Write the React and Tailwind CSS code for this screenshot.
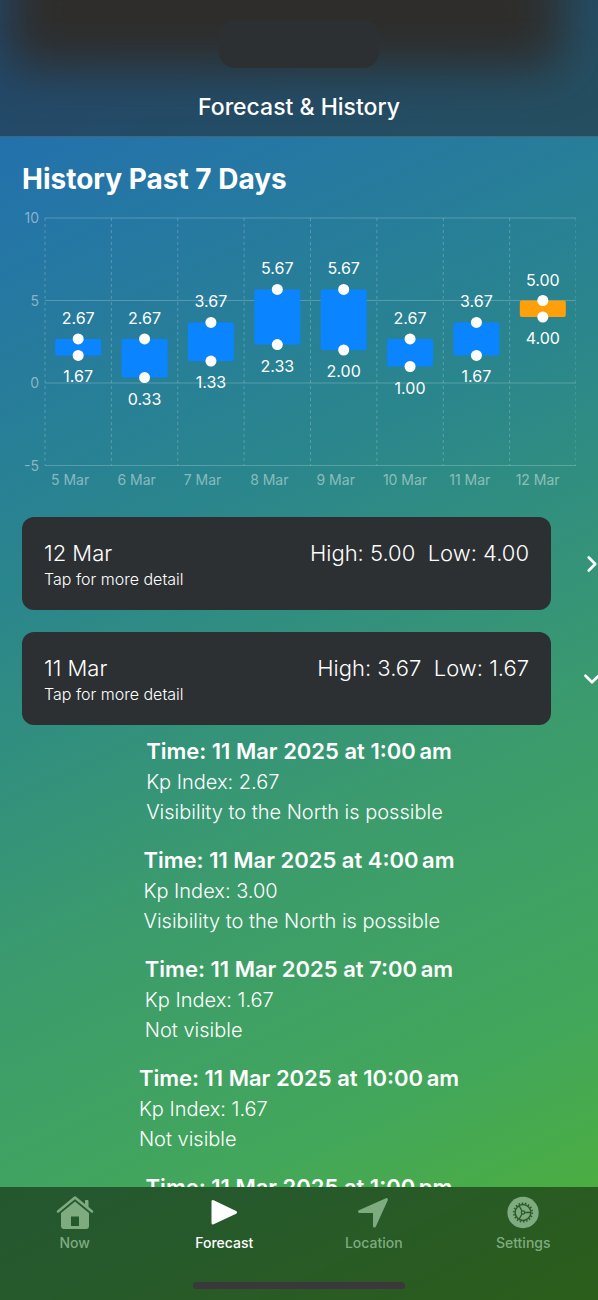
import { ChevronRight, ChevronDown } from 'lucide-react';

const history = [
  { day: '5 Mar', high: 2.67, low: 1.67 },
  { day: '6 Mar', high: 2.67, low: 0.33 },
  { day: '7 Mar', high: 3.67, low: 1.33 },
  { day: '8 Mar', high: 5.67, low: 2.33 },
  { day: '9 Mar', high: 5.67, low: 2.0 },
  { day: '10 Mar', high: 2.67, low: 1.0 },
  { day: '11 Mar', high: 3.67, low: 1.67 },
  { day: '12 Mar', high: 5.0, low: 4.0 },
];

const readings = [
  { time: '1:00\u202fam', kp: '2.67', text: 'Visibility to the North is possible' },
  { time: '4:00\u202fam', kp: '3.00', text: 'Visibility to the North is possible' },
  { time: '7:00\u202fam', kp: '1.67', text: 'Not visible' },
  { time: '10:00\u202fam', kp: '1.67', text: 'Not visible' },
  { time: '1:00\u202fpm', kp: '2.00', text: 'Not visible' },
];

// plot area inside the 554x288 chart
const LEFT = 23;
const RIGHT = 554;
const STEP = (RIGHT - LEFT) / history.length;
const yFor = (v) => 176 - v * 16.5;

function HistoryChart() {
  return (
    <svg viewBox="0 0 554 288" className="block w-full" role="img" aria-label="Kp index, past 7 days">
      {[10, 5, 0, -5].map(v => (
        <g key={v}>
          <line x1={LEFT} x2={RIGHT} y1={yFor(v)} y2={yFor(v)} stroke="#fff" strokeOpacity="0.22" />
          <text x="17" y={yFor(v) + 5} textAnchor="end" className="fill-white/45 text-[14px]">{v}</text>
        </g>
      ))}
      {Array.from({ length: history.length + 1 }, (_, i) => (
        <line
          key={i}
          x1={LEFT + i * STEP}
          x2={LEFT + i * STEP}
          y1={yFor(10)}
          y2={yFor(-5)}
          stroke="#fff"
          strokeOpacity="0.22"
          strokeDasharray="3 3"
        />
      ))}
      {history.map((d, i) => {
        const x = LEFT + (i + 0.5) * STEP;
        return (
          <g key={d.day}>
            <rect
              x={x - 23}
              y={yFor(d.high)}
              width="46"
              height={yFor(d.low) - yFor(d.high)}
              rx="2"
              fill={d.high >= 5 && d.low >= 4 ? '#ff9f0a' : '#0a84ff'}
            />
            <circle cx={x} cy={yFor(d.high)} r="5.5" fill="#fff" />
            <circle cx={x} cy={yFor(d.low)} r="5.5" fill="#fff" />
            <text x={x} y={yFor(d.high) - 15} textAnchor="middle" className="fill-white text-[16px]">{d.high.toFixed(2)}</text>
            <text x={x} y={yFor(d.low) + 27} textAnchor="middle" className="fill-white text-[16px]">{d.low.toFixed(2)}</text>
            <text x={LEFT + i * STEP + 6} y="278" className="fill-white/45 text-[14px]">{d.day}</text>
          </g>
        );
      })}
    </svg>
  );
}

function DayCard({ day, high, low, open }) {
  const Chevron = open ? ChevronDown : ChevronRight;
  return (
    <button type="button" aria-expanded={open} className="-mr-[22px] flex items-center text-left">
      <span className="flex h-[93px] flex-1 flex-col justify-center rounded-xl bg-[#2c3033] px-[22px] pt-[2px]">
        <span className="flex justify-between text-[22px] leading-7 font-light">
          <span>{day}</span>
          <span className="whitespace-pre">High: {high}  Low: {low}</span>
        </span>
        <span className="text-[16px] leading-6 font-light">Tap for more detail</span>
      </span>
      <span className="w-[47px] pl-7">
        <Chevron size={26} strokeWidth={2.5} />
      </span>
    </button>
  );
}

function HomeIcon() {
  return (
    <svg width="38" height="36" viewBox="0 0 38 36" fill="currentColor">
      <path d="M2 16.500 19 2.500 36 16.500" fill="none" stroke="currentColor" strokeWidth="2.500" strokeLinecap="round" strokeLinejoin="round" />
      <path d="M29.500 5.500h2.500v6.500l-2.500-2z" stroke="currentColor" strokeWidth="1" strokeLinejoin="round" />
      <path fillRule="evenodd" d="M19 6.500 33 18V31a3 3 0 0 1-3 3H8a3 3 0 0 1-3-3V18zM15 21.500V31h8v-9.500z" />
    </svg>
  );
}

function PlayIcon() {
  return (
    <svg width="38" height="36" viewBox="0 0 38 36" fill="currentColor">
      <path d="M8 6.500v21.500l22.500-10.700z" stroke="currentColor" strokeWidth="3" strokeLinejoin="round" />
    </svg>
  );
}

function LocationIcon() {
  return (
    <svg width="38" height="36" viewBox="0 0 38 36" fill="currentColor">
      <path d="M31.500 4.500 4.500 16.500H19.500V31z" stroke="currentColor" strokeWidth="3" strokeLinejoin="round" />
    </svg>
  );
}

function SettingsIcon() {
  return (
    <svg width="38" height="36" viewBox="0 0 38 36" fill="none">
      <circle cx="19" cy="17.500" r="15.700" fill="currentColor" />
      <g stroke="#2b5a28">
        <circle cx="19" cy="17.500" r="9.300" strokeWidth="1.600" strokeDasharray="1.500 1.746" />
        <circle cx="19" cy="17.500" r="7.900" strokeWidth="1.500" />
        <circle cx="19" cy="17.500" r="1.700" strokeWidth="1.200" />
        <path d="M20.800 17.500h6.200M18 16l-3-5.400M18 19l-3 5.400" strokeWidth="1.300" />
      </g>
    </svg>
  );
}

const tabs = [
  { label: 'Now', Icon: HomeIcon },
  { label: 'Forecast', Icon: PlayIcon, active: true },
  { label: 'Location', Icon: LocationIcon },
  { label: 'Settings', Icon: SettingsIcon },
];

export default function App() {
  return (
    <div className="flex h-screen flex-col overflow-hidden bg-[linear-gradient(155deg,#216bb7_0%,#2a868c_38%,#3b9b6d_62%,#43a75a_82%,#50b130_100%)] font-['Inter',sans-serif] text-white">
      <header className="relative flex h-[137px] shrink-0 flex-col justify-end overflow-hidden border-b border-white/15 bg-[#25303a]/60 pb-3">
        <div className="absolute -top-12 right-9 left-2 h-[116px] rounded-2xl bg-[#2e2d2b] blur-xl" />
        <div className="absolute top-5 left-1/2 h-12 w-[160px] -translate-x-1/2 rounded-2xl bg-[#2c3032]" />
        <h1 className="relative text-center text-[23px] leading-[34px] font-medium">Forecast &amp; History</h1>
      </header>

      <main className="flex min-h-0 flex-1 flex-col overflow-hidden px-[22px] pt-6">
        <h2 className="shrink-0 text-[28px] leading-9 font-bold">History Past 7 Days</h2>
        <div className="mt-[10px] shrink-0">
          <HistoryChart />
        </div>

        <div className="mt-[22px] flex shrink-0 flex-col gap-[22px]">
          <DayCard day="12 Mar" high="5.00" low="4.00" open={false} />
          <DayCard day="11 Mar" high="3.67" low="1.67" open />
        </div>

        <ul className="mt-[10px] flex flex-col items-center gap-[17px]">
          {readings.map(r => (
            <li key={r.time} className="shrink-0">
              <h3 className="text-[22px] leading-8 font-semibold">Time: 11 Mar 2025 at {r.time}</h3>
              <p className="text-[20px] leading-[30px] font-light">Kp Index: {r.kp}</p>
              <p className="text-[20px] leading-[30px] font-light">{r.text}</p>
            </li>
          ))}
        </ul>
      </main>

      <nav className="flex h-[113px] shrink-0 flex-col items-center justify-between bg-[#12200c]/58 pt-2 pb-[11px]">
        <div className="grid w-full grid-cols-4">
          {tabs.map(({ label, Icon, active }) => (
            <button
              key={label}
              type="button"
              className={`flex flex-col items-center gap-1 text-[14px] leading-4 font-medium ${active ? 'text-white' : 'text-[#7fab80]'}`}
            >
              <Icon />
              {label}
            </button>
          ))}
        </div>
        <div className="h-[7px] w-[212px] rounded-full bg-[#3a383b]" />
      </nav>
    </div>
  );
}
